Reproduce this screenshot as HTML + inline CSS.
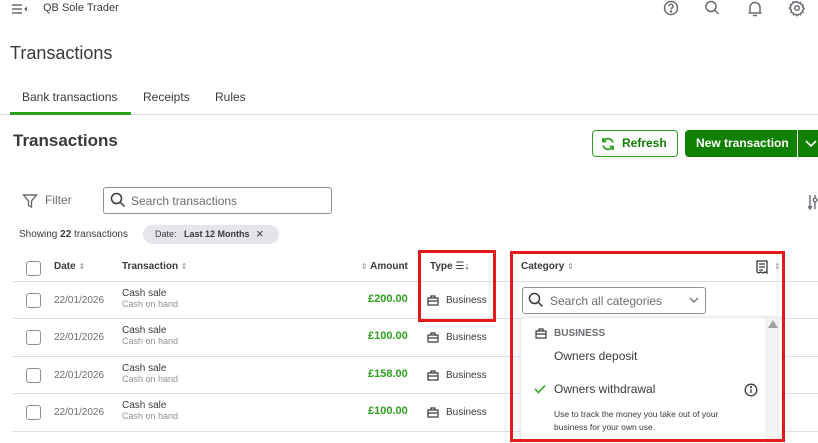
<!DOCTYPE html>
<html><head><meta charset="utf-8"><style>
*{margin:0;padding:0;box-sizing:border-box}
body{width:818px;height:443px;overflow:hidden;background:#fff;font-family:"Liberation Sans",Arial,sans-serif;color:#393a3d;position:relative}
.a{position:absolute;white-space:nowrap}
.cb{position:absolute;left:26px;width:15px;height:15px;border:1.3px solid #8d9096;border-radius:3px;background:#fff}
.hr{position:absolute;left:13px;right:0;height:1px;background:#dcdde0}
.g{color:#2ca01c;font-weight:bold;font-size:11px}
.sm{font-size:10px}
.sub{font-size:9px;color:#8d9096}
.srt{color:#8d9096;font-size:8px;font-weight:normal}
</style></head><body>
<svg class="a" style="left:11px;top:3px" width="18" height="12" viewBox="0 0 18 12"><path d="M1 2h10M1 6h10M1 10h10" stroke="#6b6c72" stroke-width="1.4"/><path d="M16 3.5l-3 2.5 3 2.5z" fill="#6b6c72"/></svg>
<div class="a" style="left:43px;top:2px;font-size:11px;color:#393a3d">QB Sole Trader</div>
<svg class="a" style="left:663px;top:0" width="155" height="18" viewBox="0 0 155 18" fill="none" stroke="#6b6c72" stroke-width="1.5">
<circle cx="8" cy="8" r="6.5"/><path d="M6 6.3a2 2 0 1 1 2.6 1.8c-.6.3-.6.8-.6 1.4" /><circle cx="8" cy="11.5" r=".5" fill="#6b6c72"/>
<circle cx="48" cy="6.5" r="5"/><path d="M51.5 10l4 4"/>
<path d="M87 13V7.5a5 5 0 0 1 10 0V13zM85.5 13h13M90 15.5h4"/>
<circle cx="134" cy="8" r="2.3"/><path d="M134 1.5l1.5 1.5 2-.5.6 2 2 .6-.5 2 1.5 1.5-1.5 1.5.5 2-2 .6-.6 2-2-.5-1.5 1.5-1.5-1.5-2 .5-.6-2-2-.6.5-2L126.5 8l1.5-1.5-.5-2 2-.6.6-2 2 .5z"/>
</svg>
<div class="a" style="left:10px;top:43px;font-size:18px;color:#393a3d">Transactions</div>
<div class="a" style="left:22px;top:90px;font-size:12px">Bank transactions</div>
<div class="a" style="left:143px;top:90px;font-size:12px">Receipts</div>
<div class="a" style="left:215px;top:90px;font-size:12px">Rules</div>
<div class="a" style="left:0;top:114px;width:818px;height:1px;background:#dcdde0"></div>
<div class="a" style="left:10px;top:112px;width:121px;height:3px;background:#2ca01c"></div>
<div class="a" style="left:13px;top:131px;font-size:17px;font-weight:bold;color:#393a3d">Transactions</div>
<div class="a" style="left:592px;top:130px;width:86px;height:27px;border:1px solid #2ca01c;border-radius:4px"></div>
<svg class="a" style="left:600px;top:136px" width="16" height="16" viewBox="0 0 16 16" fill="none" stroke="#2ca01c" stroke-width="1.8"><path d="M13 6.5A5.5 5.5 0 0 0 3.3 5M3 9.5A5.5 5.5 0 0 0 12.7 11"/><path d="M3 2v3.5h3.5M13 14v-3.5H9.5"/></svg>
<div class="a" style="left:622px;top:136px;font-size:12px;font-weight:bold;color:#108000">Refresh</div>
<div class="a" style="left:685px;top:130px;width:133px;height:27px;background:#108000;border-radius:4px 0 0 4px"></div>
<div class="a" style="left:797px;top:130px;width:1px;height:27px;background:#fff"></div>
<div class="a" style="left:696px;top:136px;font-size:12px;font-weight:bold;color:#fff">New transaction</div>
<svg class="a" style="left:805px;top:139px" width="13" height="9" viewBox="0 0 13 9"><path d="M1 2l5 5 5-5" stroke="#fff" stroke-width="1.6" fill="none"/></svg>
<svg class="a" style="left:22px;top:193px" width="16" height="16" viewBox="0 0 16 16" fill="none" stroke="#6b6c72" stroke-width="1.4"><path d="M1.5 2h13L9.5 8v6l-3-1.5V8z"/></svg>
<div class="a" style="left:45px;top:193px;font-size:12px;color:#6b6c72">Filter</div>
<div class="a" style="left:103px;top:187px;width:229px;height:27px;border:1px solid #8d9096;border-radius:3px"></div>
<svg class="a" style="left:110px;top:192px" width="16" height="16" viewBox="0 0 16 16" fill="none" stroke="#393a3d" stroke-width="1.5"><circle cx="6.5" cy="6.5" r="5"/><path d="M10 10l4.5 4.5"/></svg>
<div class="a" style="left:131px;top:194px;font-size:12px;color:#6b6c72">Search transactions</div>
<svg class="a" style="left:808px;top:194px" width="10" height="16" viewBox="0 0 10 16" fill="none" stroke="#6b6c72" stroke-width="1.4"><path d="M2 1v14M0 12l2 3 2-3M7 1v14"/><circle cx="7" cy="6" r="1.8" fill="#fff"/></svg>
<div class="a" style="left:19px;top:229px;font-size:10px;color:#393a3d">Showing <b>22</b> transactions</div>
<div class="a" style="left:143px;top:225px;width:136px;height:19px;background:#e3e5ea;border-radius:10px"></div>
<div class="a" style="left:155px;top:229px;font-size:9px;color:#393a3d">Date:&nbsp;&nbsp;&nbsp;<b>Last 12 Months</b></div>
<div class="a" style="left:256px;top:226px;font-size:13px;color:#393a3d">×</div>
<div class="cb" style="top:261px"></div>
<div class="a sm" style="left:54px;top:261px;font-weight:bold">Date <span class="srt">⇕</span></div>
<div class="a sm" style="left:122px;top:261px;font-weight:bold">Transaction <span class="srt">⇕</span></div>
<div class="a sm" style="left:361px;top:261px;font-weight:bold"><span class="srt">⇕</span> Amount</div>
<div class="a sm" style="left:430px;top:261px;font-weight:bold">Type <span style="font-weight:normal">☰↓</span></div>
<div class="a sm" style="left:521px;top:261px;font-weight:bold">Category <span class="srt">⇕</span></div>
<svg class="a" style="left:756px;top:260px" width="12" height="14" viewBox="0 0 12 14" fill="none" stroke="#393a3d" stroke-width="1.3"><path d="M1 1h10v12l-2-1-2 1-2-1-2 1-2-1zM3 4h6M3 7h6M3 10h4"/></svg>
<div class="a srt" style="left:774px;top:262px">⇕</div>
<div class="hr" style="top:281px"></div>
<div class="hr" style="top:318px"></div>
<div class="hr" style="top:356px"></div>
<div class="hr" style="top:393px"></div>
<div class="hr" style="top:431px"></div>
<div class="cb" style="top:293px"></div><div class="cb" style="top:330px"></div><div class="cb" style="top:368px"></div><div class="cb" style="top:405px"></div>
<div class="a sm" style="left:54px;top:295px;color:#6b6c72">22/01/2026</div>
<div class="a sm" style="left:54px;top:332px;color:#6b6c72">22/01/2026</div>
<div class="a sm" style="left:54px;top:370px;color:#6b6c72">22/01/2026</div>
<div class="a sm" style="left:54px;top:407px;color:#6b6c72">22/01/2026</div>
<div class="a" style="left:122px;top:288px"><div class="sm">Cash sale</div><div class="sub">Cash on hand</div></div>
<div class="a" style="left:122px;top:325px"><div class="sm">Cash sale</div><div class="sub">Cash on hand</div></div>
<div class="a" style="left:122px;top:363px"><div class="sm">Cash sale</div><div class="sub">Cash on hand</div></div>
<div class="a" style="left:122px;top:400px"><div class="sm">Cash sale</div><div class="sub">Cash on hand</div></div>
<div class="a g" style="left:368px;top:293px">£200.00</div>
<div class="a g" style="left:368px;top:330px">£100.00</div>
<div class="a g" style="left:368px;top:368px">£158.00</div>
<div class="a g" style="left:368px;top:405px">£100.00</div>
<svg width="0" height="0" style="position:absolute"><defs><symbol id="bag" viewBox="0 0 12 12"><path d="M1 4h10v7H1zM4 4V2h4v2M1 7h10" fill="none" stroke="#393a3d" stroke-width="1.2"/></symbol></defs></svg>
<svg class="a" style="left:427px;top:294px" width="12" height="12"><use href="#bag"/></svg>
<svg class="a" style="left:427px;top:331px" width="12" height="12"><use href="#bag"/></svg>
<svg class="a" style="left:427px;top:369px" width="12" height="12"><use href="#bag"/></svg>
<svg class="a" style="left:427px;top:406px" width="12" height="12"><use href="#bag"/></svg>
<div class="a sm" style="left:446px;top:295px">Business</div>
<div class="a sm" style="left:446px;top:332px">Business</div>
<div class="a sm" style="left:446px;top:370px">Business</div>
<div class="a sm" style="left:446px;top:407px">Business</div>
<div class="a" style="left:522px;top:287px;width:184px;height:27px;border:1px solid #8d9096;border-radius:3px;background:#fff"></div>
<svg class="a" style="left:528px;top:292px" width="16" height="16" viewBox="0 0 16 16" fill="none" stroke="#393a3d" stroke-width="1.5"><circle cx="6.5" cy="6.5" r="5"/><path d="M10 10l4.5 4.5"/></svg>
<div class="a" style="left:550px;top:294px;font-size:12px;color:#6b6c72">Search all categories</div>
<svg class="a" style="left:689px;top:297px" width="10" height="7" viewBox="0 0 10 7"><path d="M1 1l4 4 4-4" stroke="#6b6c72" stroke-width="1.3" fill="none"/></svg>
<div class="a" style="left:521px;top:318px;width:260px;height:125px;background:#fff;box-shadow:0 0 4px rgba(0,0,0,.2);border-radius:3px"></div>
<div class="a" style="left:765px;top:318px;width:15px;height:125px;background:#f4f4f5"></div>
<div class="a" style="left:768px;top:320px;width:0;height:0;border-left:5px solid transparent;border-right:5px solid transparent;border-bottom:8px solid #a0a0a0"></div>
<svg class="a" style="left:535px;top:327px" width="12" height="12"><use href="#bag"/></svg>
<div class="a" style="left:554px;top:328px;font-size:10px;font-weight:bold;color:#6b6c72">BUSINESS</div>
<div class="a" style="left:554px;top:349px;font-size:12px;color:#393a3d">Owners deposit</div>
<svg class="a" style="left:534px;top:384px" width="12" height="10" viewBox="0 0 12 10"><path d="M1 5l3.5 3.5L11 1.5" stroke="#2ca01c" stroke-width="1.5" fill="none"/></svg>
<div class="a" style="left:554px;top:382px;font-size:12px;color:#393a3d">Owners withdrawal</div>
<svg class="a" style="left:744px;top:383px" width="14" height="14" viewBox="0 0 14 14" fill="none" stroke="#393a3d" stroke-width="1.3"><circle cx="7" cy="7" r="5.8"/><path d="M7 6v4"/><circle cx="7" cy="4" r=".5" fill="#393a3d"/></svg>
<div class="a" style="left:554px;top:408px;font-size:8.5px;line-height:13px;color:#393a3d">Use to track the money you take out of your<br>business for your own use.</div>
<div class="a" style="left:418px;top:250px;width:78px;height:72px;border:3px solid #e3191c"></div>
<div class="a" style="left:510px;top:251px;width:275px;height:191px;border:3px solid #e3191c"></div>
</body></html>
